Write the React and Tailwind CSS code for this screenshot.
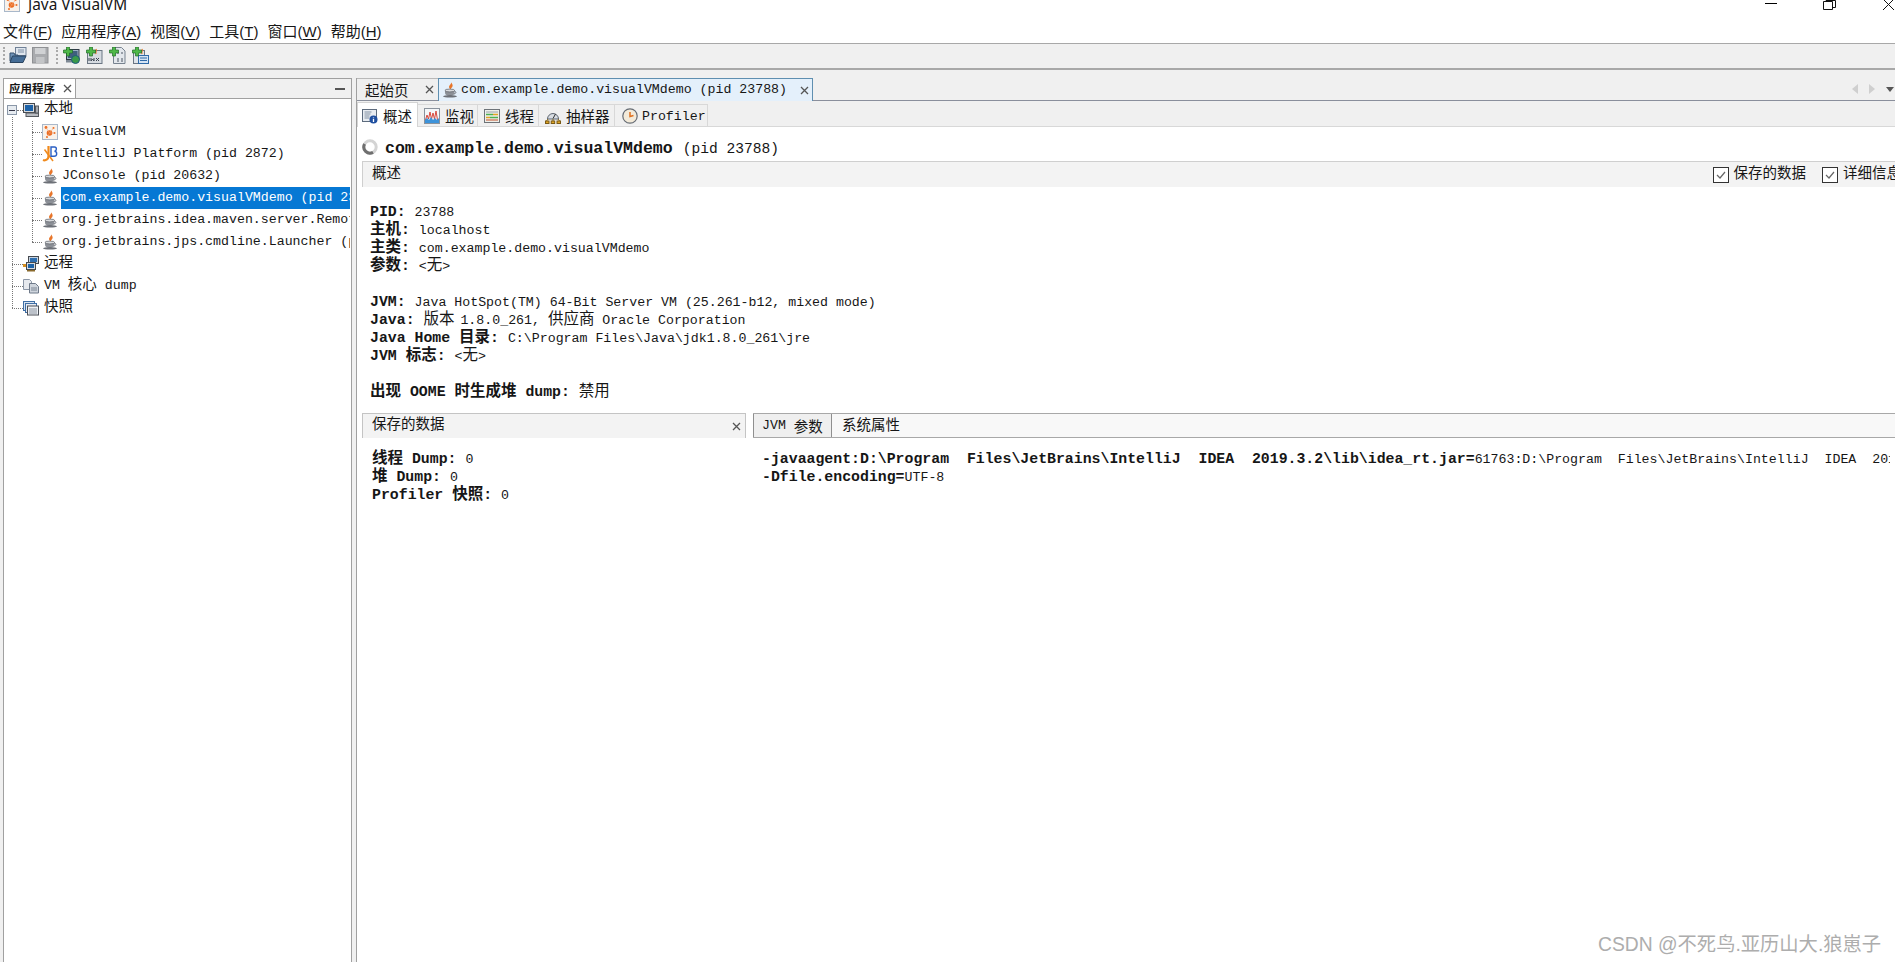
import React from "react";

const Z = ({ children }) => (
    <span className="font-['Noto_Sans_CJK_SC','Liberation_Sans',sans-serif] text-[15.5px] leading-[10px]">{children}</span>
);
const L = ({ children }) => (
    <span className="font-['Noto_Sans_CJK_SC','Liberation_Sans',sans-serif] text-[14.5px] leading-[10px]">{children}</span>
);
const B = ({ children }) => <span className="font-bold text-[14.85px] leading-[10px] whitespace-pre">{children}</span>;

const JavaIcon = () => (
    <svg width="16" height="16" viewBox="0 0 16 16" className="shrink-0">
        <path d="M9 .3c.8 2-2.600 3-1.800 5.500.3.8.9 1.300 1.500 1.800-.2-1.300 2.600-2.400 1.800-4.800C10.200 1.900 9.700 1.100 9 .3z" fill="#e8762b" />
        <path d="M3 8.500h9.500v2.500c0 1.900-2 2.800-4.700 2.800S3 12.900 3 11z" fill="#8c9097" />
        <ellipse cx="7.800" cy="8.500" rx="4.900" ry="1.400" fill="#d9dbde" stroke="#5a5e66" strokeWidth=".7" />
        <ellipse cx="8" cy="14.300" rx="7" ry="1.300" fill="#6d7178" />
        <path d="M12.500 9.300c2 0 1.800 2.400-.6 2.600" stroke="#6d7178" fill="none" />
    </svg>
);

const VisualVMIcon = () => (
    <svg width="16" height="16" viewBox="0 0 16 16" className="shrink-0">
        <rect x=".5" y=".5" width="15" height="15" fill="#f8f1ea" stroke="#a9b8ca" />
        <circle cx="7.500" cy="9" r="2.800" fill="#ec6a1f" />
        <circle cx="4" cy="3.500" r="1.400" fill="#ec6a1f" />
        <circle cx="11.500" cy="4" r="1" fill="#ec6a1f" />
        <circle cx="5" cy="13" r="1" fill="#ec6a1f" />
        <circle cx="12.500" cy="9" r="1" fill="#ec6a1f" />
        <path d="M4 3.500 7.500 9l4-5M7.500 9l-2.500 4M7.500 9h5" stroke="#f2a273" strokeWidth=".6" fill="none" />
    </svg>
);

const IdeaIcon = () => (
    <svg width="16" height="16" viewBox="0 0 16 16" className="shrink-0">
        <path d="M6.500 0v10c0 3.500-3 5-5.500 4" stroke="#f08a1d" strokeWidth="2.200" fill="none" />
        <path d="M2.500 3.500 11 15" stroke="#f08a1d" strokeWidth="1.600" fill="none" />
        <path d="M9 1h3.500c2.500 0 2.500 4 0 4.300 3 .3 3 5-.5 5H9z" stroke="#2a5fc4" strokeWidth="1.400" fill="none" />
    </svg>
);

const HostIcon = () => (
    <svg width="16" height="16" viewBox="0 0 16 16" className="shrink-0">
        <rect x=".5" y="1.500" width="11" height="9" fill="#d8dadd" stroke="#45494f" />
        <rect x="2" y="3" width="8" height="6" fill="#1c62a8" />
        <rect x="3" y="11" width="12.500" height="3.500" fill="#b8bbc0" stroke="#55595f" />
        <rect x="12.500" y="4" width="3" height="7" fill="#a9acb1" stroke="#55595f" />
    </svg>
);

const RemoteIcon = () => (
    <svg width="16" height="16" viewBox="0 0 16 16" className="shrink-0">
        <rect x="5.500" y=".5" width="10" height="7" fill="#c9d4e0" stroke="#45494f" />
        <rect x="7" y="2" width="7" height="4" fill="#2f6fb0" />
        <rect x="3.500" y="6.500" width="9" height="7" fill="#d8dadd" stroke="#45494f" />
        <rect x="5" y="8" width="6" height="4" fill="#1c62a8" />
        <rect x="0" y="8" width="3" height="3" fill="#d9901e" />
        <rect x="4" y="14" width="8" height="1.500" fill="#8a6a2c" />
    </svg>
);

const DumpIcon = () => (
    <svg width="16" height="16" viewBox="0 0 16 16" className="shrink-0">
        <path d="M.5 1.500h6l2 2v8h-8z" fill="#e6e9ee" stroke="#8b96a6" />
        <path d="M6.500 5.500h6l3 3v6.500h-9z" fill="#cfd5dd" stroke="#6f7a8a" />
        <path d="M8 10h6M8 12h6" stroke="#7c8796" />
    </svg>
);

const SnapshotIcon = () => (
    <svg width="16" height="16" viewBox="0 0 16 16" className="shrink-0">
        <rect x=".5" y="1.500" width="11" height="9" fill="#d9e4f1" stroke="#3f6ea5" />
        <rect x="2.500" y="3.500" width="11" height="9" fill="#e6ebf2" stroke="#3f6ea5" />
        <rect x="4.500" y="6" width="11" height="9" fill="#eef1f5" stroke="#4a4f57" />
        <path d="M6 9h8M6 11h8M6 13h8" stroke="#8a929e" />
    </svg>
);

const Plus = () => (
    <path d="M3.500 0h3v3h3v3h-3v3h-3V6h-3V3h3z" fill="#4fb848" stroke="#1f6b2a" strokeWidth=".7" />
);

const OpenIcon = () => (
    <svg width="18" height="17" viewBox="0 0 18 17">
        <rect x="6.500" y=".5" width="10.500" height="8" fill="#dfe6ee" stroke="#6f8096" />
        <path d="M9 3h6M9 5h6" stroke="#7d8ea3" />
        <path d="M1 6h4l1 2h3v6H1z" fill="#6f93b8" stroke="#35506e" />
        <path d="M1 15.500 3.500 9H17l-3 6.500z" fill="#456d96" stroke="#2b4560" />
    </svg>
);

const SaveIcon = () => (
    <svg width="17" height="17" viewBox="0 0 17 17">
        <rect x=".5" y=".5" width="15.500" height="15.500" fill="#a9abae" stroke="#8f9194" />
        <rect x="3" y="1" width="10.500" height="6" fill="#d0d2d4" />
        <rect x="4" y="10" width="8.500" height="6" fill="#c3c5c7" />
    </svg>
);

const AddHostIcon = () => (
    <svg width="17" height="17" viewBox="0 0 17 17">
        <rect x="3.500" y="2.500" width="12.500" height="10" fill="#9fb2c6" stroke="#2e3a46" />
        <rect x="5" y="4" width="9.500" height="7" fill="#3f5f7d" />
        <rect x="3" y="13" width="10" height="2.500" fill="#7d8894" />
        <circle cx="12.500" cy="12.500" r="4" fill="#3a9a4a" stroke="#1e5a7d" />
        <Plus />
    </svg>
);

const AddJmxIcon = () => (
    <svg width="17" height="17" viewBox="0 0 17 17">
        <rect x="1.500" y="3.500" width="14.500" height="13" fill="#d6dbe1" stroke="#6b7683" />
        <path d="M10 2c1 2-1 3 0 5" stroke="#e8762b" strokeWidth="1.300" fill="none" />
        <path d="M3 14v-3M5 11v3l1.500-2 1.500 2v-3M10 11l3 3M13 11l-3 3" stroke="#3b4450" fill="none" />
        <Plus />
    </svg>
);

const AddCoreIcon = () => (
    <svg width="17" height="17" viewBox="0 0 17 17">
        <path d="M4.500.5h8l3.500 3.500v12.500H4.500z" fill="#e3e7ec" stroke="#77828f" />
        <path d="M8 6h2M12 6h2M8 12h2M12 12h2M8 14h2M12 14h2" stroke="#4a5563" />
        <Plus />
    </svg>
);

const AddSnapIcon = () => (
    <svg width="17" height="17" viewBox="0 0 17 17">
        <rect x="1.500" y="3.500" width="11" height="13" fill="#dfe4ea" stroke="#6b7683" />
        <path d="M10 2c1 2-1 3 0 5" stroke="#e8762b" strokeWidth="1.300" fill="none" />
        <rect x="6.500" y="8.500" width="10" height="8" fill="#d5e4f4" stroke="#2f6aa8" />
        <path d="M8 11h7M8 13.500h7" stroke="#2f6aa8" />
        <Plus />
    </svg>
);

const OverviewIcon = () => (
    <svg width="16" height="16" viewBox="0 0 16 16" className="shrink-0">
        <rect x=".5" y="1.500" width="14" height="12" fill="#e8ecf1" stroke="#5d6b7d" />
        <path d="M2.500 4h7M2.500 6h6M2.500 8h5M2.500 10h5" stroke="#8391a3" />
        <circle cx="11.500" cy="11.500" r="4" fill="#1f4fa0" />
        <path d="M11.500 9.500v.8M11.500 11v3" stroke="#fff" strokeWidth="1.300" />
    </svg>
);

const MonitorIcon = () => (
    <svg width="16" height="16" viewBox="0 0 16 16" className="shrink-0">
        <rect x=".5" y=".5" width="15" height="15" fill="#f4f6f8" stroke="#8a929c" />
        <path d="M1.500 12 3 7l1.500 4L6 4l1.500 7L9 5l1.500 6L12 3l1.500 9" stroke="#d8483c" fill="none" />
        <path d="M1 15v-3l2-2 2 2 2-3 2 3 2-2 2 2 2-2v5z" fill="#3d93da" />
    </svg>
);

const ThreadsIcon = () => (
    <svg width="16" height="16" viewBox="0 0 16 16" className="shrink-0">
        <rect x=".5" y="1.500" width="15" height="13" fill="#eef0ea" stroke="#6e7378" />
        <path d="M2 4h12" stroke="#9aa3ad" />
        <path d="M2 6.500h7" stroke="#4caf50" strokeWidth="1.500" />
        <path d="M9 6.500h5" stroke="#e0a526" strokeWidth="1.500" />
        <path d="M2 9.500h4" stroke="#e0a526" strokeWidth="1.500" />
        <path d="M6 9.500h8" stroke="#4caf50" strokeWidth="1.500" />
        <path d="M2 12h12" stroke="#c96b4a" strokeWidth="1.200" />
    </svg>
);

const SamplerIcon = () => (
    <svg width="16" height="16" viewBox="0 0 16 16" className="shrink-0">
        <path d="M2.500 11a5.500 5.500 0 1 1 11 0z" fill="#d8dde3" stroke="#5d6570" />
        <path d="M8 10.500 10.500 6" stroke="#333" />
        <path d="M3 11 1.500 13M8 11v2M13 11l1.500 2" stroke="#8a6a1c" />
        <rect x=".5" y="13" width="3.500" height="2.500" fill="#e0a526" stroke="#7a5a14" />
        <rect x="6.200" y="13" width="3.500" height="2.500" fill="#e0a526" stroke="#7a5a14" />
        <rect x="12" y="13" width="3.500" height="2.500" fill="#e0a526" stroke="#7a5a14" />
    </svg>
);

const ProfilerIcon = () => (
    <svg width="16" height="16" viewBox="0 0 16 16" className="ml-[1px] shrink-0">
        <circle cx="8" cy="8" r="7.200" fill="#f3ead9" stroke="#666c74" strokeWidth="1.200" />
        <path d="M8 4v4.500l3.500-1" stroke="#e0701e" strokeWidth="1.500" fill="none" />
    </svg>
);

const Spinner = () => (
    <svg width="16" height="16" viewBox="0 0 16 16" className="-mt-[5px] shrink-0">
        <circle cx="8" cy="8" r="6.200" fill="none" stroke="#d4d4d4" strokeWidth="3" />
        <path d="M2.600 5A6.200 6.200 0 0 0 11 13.400" fill="none" stroke="#6f6f6f" strokeWidth="3" />
    </svg>
);

const Checked = () => (
    <svg width="16" height="16" viewBox="0 0 16 16" className="shrink-0">
        <rect x=".5" y=".5" width="15" height="15" fill="#fff" stroke="#333" />
        <path d="M4 8l3 3 5-6" fill="none" stroke="#666" strokeWidth="1.200" />
    </svg>
);

const CloseX = () => (
    <svg width="9" height="9" viewBox="0 0 9 9" className="shrink-0">
        <path d="M1 1l7 7M8 1L1 8" stroke="#555" strokeWidth="1.300" />
    </svg>
);

const MenuItem = ({ zh, letter }) => (
    <span className="whitespace-nowrap">
        {zh}(<span className="underline underline-offset-2">{letter}</span>)
    </span>
);

const Line = ({ children }) => <div className="h-[18px]">{children}</div>;

const TreeRoot = ({ icon, children }) => (
    <div className="relative flex h-[22px] items-center pl-[19px]">
        <span className="absolute left-[8px] top-[11px] w-[11px] border-t border-dotted border-[#777]" />
        {icon}
        <span className="ml-[5px] whitespace-pre">{children}</span>
    </div>
);

const TreeChild = ({ icon, selected, children }) => (
    <div className="relative flex h-[22px] items-center pl-[38px] pr-[1px]">
        <span className="absolute left-[28px] top-[11px] w-[10px] border-t border-dotted border-[#777]" />
        {icon}
        <span className={selected
            ? "ml-[3px] flex h-full min-w-0 flex-1 items-center overflow-hidden whitespace-nowrap bg-[#0678d4] pl-[1px] text-white"
            : "ml-[3px] flex h-full min-w-0 flex-1 items-center overflow-hidden whitespace-nowrap pl-[1px]"}>
            {children}
        </span>
    </div>
);

const SubTab = ({ icon, width, active, children }) => (
    <div className={active
        ? "mt-[1px] flex h-[26px] items-center gap-[5px] border border-b-0 border-[#d4d4d4] bg-white pl-[4px]"
        : "mt-[3px] flex h-[23px] items-center gap-[5px] border-r border-t border-[#d8d8d8] pl-[6px]"}
        style={{ width }}>
        {icon}
        {children}
    </div>
);

const Sidebar = () => (
    <aside className="flex w-[349px] shrink-0 flex-col overflow-hidden border-x border-t border-[#a0a0a0] bg-white">
        <div className="flex h-[20px] shrink-0 items-center border-b border-[#a0a0a0] bg-[#f0f0f0]">
            <div className="flex h-full w-[72px] items-center border-r border-[#a0a0a0] bg-white pl-[5px]">
                <span className="font-['Noto_Sans_CJK_SC',sans-serif] text-[11.5px] font-bold leading-none">应用程序</span>
                <span className="ml-[8px]"><CloseX /></span>
            </div>
            <span className="ml-auto mr-[6px] h-[2px] w-[10px] bg-[#555]" />
        </div>
        <div className="relative">
            <span className="absolute left-[8px] top-[18px] h-[191px] border-l border-dotted border-[#777]" />
            <span className="absolute left-[28px] top-[22px] h-[121px] border-l border-dotted border-[#777]" />
            <div className="relative flex h-[22px] items-center pl-[19px]">
                <span className="absolute left-[3px] top-[6px] flex h-[10px] w-[10px] items-center justify-center border border-[#8a97a8] bg-[#e6ebf0]">
                    <span className="h-[1px] w-[6px] bg-[#334]" />
                </span>
                <span className="absolute left-[13px] top-[11px] w-[6px] border-t border-dotted border-[#777]" />
                <HostIcon />
                <span className="ml-[5px]"><L>本地</L></span>
            </div>
            <TreeChild icon={<VisualVMIcon />}>VisualVM</TreeChild>
            <TreeChild icon={<IdeaIcon />}>IntelliJ Platform (pid 2872)</TreeChild>
            <TreeChild icon={<JavaIcon />}>JConsole (pid 20632)</TreeChild>
            <TreeChild icon={<JavaIcon />} selected>com.example.demo.visualVMdemo (pid 23788)</TreeChild>
            <TreeChild icon={<JavaIcon />}>org.jetbrains.idea.maven.server.RemoteMavenServer (pid 9120)</TreeChild>
            <TreeChild icon={<JavaIcon />}>org.jetbrains.jps.cmdline.Launcher (pid 15144)</TreeChild>
            <TreeRoot icon={<RemoteIcon />}><L>远程</L></TreeRoot>
            <TreeRoot icon={<DumpIcon />}>VM <L>核心</L> dump</TreeRoot>
            <TreeRoot icon={<SnapshotIcon />}><L>快照</L></TreeRoot>
        </div>
    </aside>
);

const Overview = () => (
    <div className="px-[5px]">
        <div className="flex h-[34px] items-center gap-[7px] pt-[10px]">
            <Spinner />
            <span className="text-[16.55px] font-bold whitespace-pre">com.example.demo.visualVMdemo</span>
            <span className="ml-[3px] text-[14.6px]">(pid 23788)</span>
        </div>
        <div className="-mr-[11px] flex h-[26px] items-center border-l border-t border-[#cfcfcf] bg-[#f3f3f3] pl-[9px]">
            <span><L>概述</L></span>
            <div className="ml-auto flex items-center whitespace-nowrap">
                <Checked />
                <span className="ml-[5px] mr-[16px]"><L>保存的数据</L></span>
                <Checked />
                <span className="ml-[5px]"><L>详细信息</L></span>
            </div>
        </div>
        <div className="pl-[8px] pt-[17px] whitespace-pre">
            <Line><B>PID: </B>23788</Line>
            <Line><B><Z>主机</Z>: </B>localhost</Line>
            <Line><B><Z>主类</Z>: </B>com.example.demo.visualVMdemo</Line>
            <Line><B><Z>参数</Z>: </B>&lt;<Z>无</Z>&gt;</Line>
            <div className="h-[18px]" />
            <Line><B>JVM: </B>Java HotSpot(TM) 64-Bit Server VM (25.261-b12, mixed mode)</Line>
            <Line><B>Java: </B><Z>版本</Z><span className="-ml-[2px]"> 1.8.0_261, </span><Z>供应商</Z> Oracle Corporation</Line>
            <Line><B>Java Home <Z>目录</Z>: </B>C:\Program Files\Java\jdk1.8.0_261\jre</Line>
            <Line><B>JVM <Z>标志</Z>: </B>&lt;<Z>无</Z>&gt;</Line>
            <div className="h-[18px]" />
            <Line><B><Z>出现</Z> OOME <Z>时生成堆</Z> dump: </B><Z>禁用</Z></Line>
        </div>
        <div className="mt-[11px] flex">
            <section className="w-[384px] shrink-0">
                <div className="flex h-[25px] items-center border-x border-t border-[#c4c4c4] bg-[#f3f3f3] pl-[9px] pr-[4px]">
                    <span><L>保存的数据</L></span>
                    <span className="ml-auto"><CloseX /></span>
                </div>
                <div className="pl-[10px] pt-[13px] whitespace-pre">
                    <Line><B><Z>线程</Z> Dump: </B>0</Line>
                    <Line><B><Z>堆</Z> Dump: </B>0</Line>
                    <Line><B>Profiler <Z>快照</Z>: </B>0</Line>
                </div>
            </section>
            <section className="ml-[7px] min-w-0 flex-1">
                <div className="-mr-[10px] flex h-[25px] items-center border-y border-[#a8a8a8] bg-[#f8f8f8]">
                    <div className="flex h-full w-[79px] items-center whitespace-pre border-x border-[#8f8f8f] bg-[#efefef] pl-[8px]">JVM <L>参数</L></div>
                    <span className="ml-[10px] mt-[2px]"><L>系统属性</L></span>
                </div>
                <div className="overflow-hidden pl-[9px] pt-[13px] whitespace-pre">
                    <Line><B>-javaagent:D:\Program  Files\JetBrains\IntelliJ  IDEA  2019.3.2\lib\idea_rt.jar=</B>61763:D:\Program  Files\JetBrains\IntelliJ  IDEA  2019.3.2\bin</Line>
                    <Line><B>-Dfile.encoding=</B>UTF-8</Line>
                </div>
            </section>
        </div>
    </div>
);

const Workspace = () => (
    <main className="ml-[4px] flex min-w-0 flex-1 flex-col overflow-hidden border-l border-[#a0a0a0]">
        <div className="flex h-[23px] shrink-0 items-stretch border-b border-[#8a8f9c]">
            <div className="flex w-[81px] items-center whitespace-nowrap border-t border-[#b8b8b8] bg-[#efefef] pl-[8px]">
                <L>起始页</L>
                <span className="ml-[16px]"><CloseX /></span>
            </div>
            <div className="-mb-[1px] flex w-[375px] items-center border-x border-t border-[#5f8fb0] bg-[#e4f0fb] pl-[3px]">
                <JavaIcon />
                <span className="ml-[3px] whitespace-nowrap">com.example.demo.visualVMdemo (pid 23788)</span>
                <span className="ml-[13px]"><CloseX /></span>
            </div>
            <div className="ml-auto flex items-center gap-[11px] pr-[1px]">
                <span className="h-0 w-0 border-y-[5px] border-r-[6px] border-y-transparent border-r-[#cfcfcf]" />
                <span className="h-0 w-0 border-y-[5px] border-l-[6px] border-y-transparent border-l-[#cfcfcf]" />
                <span className="h-0 w-0 border-x-[4px] border-t-[5px] border-x-transparent border-t-[#555]" />
            </div>
        </div>
        <div className="flex h-[26px] shrink-0 border-b border-[#d8d8d8]">
            <SubTab icon={<OverviewIcon />} width={61} active><L>概述</L></SubTab>
            <SubTab icon={<MonitorIcon />} width={60}><L>监视</L></SubTab>
            <SubTab icon={<ThreadsIcon />} width={61}><L>线程</L></SubTab>
            <SubTab icon={<SamplerIcon />} width={76}><L>抽样器</L></SubTab>
            <SubTab icon={<ProfilerIcon />} width={93}><span className="-ml-[1px] mt-[2px]">Profiler</span></SubTab>
        </div>
        <div className="flex-1 overflow-hidden bg-white">
            <Overview />
        </div>
    </main>
);

const App = () => (
    <div className="relative flex h-screen flex-col overflow-hidden bg-white font-['Liberation_Mono','Noto_Sans_CJK_SC',monospace] text-[13.25px] leading-[18px] text-[#161616]">
        <header className="flex h-[22px] shrink-0 overflow-hidden">
            <div className="-mt-[4px] ml-[4px] flex h-[16px] items-center">
                <VisualVMIcon />
            </div>
            <span className="-mt-[5px] ml-[8px] font-['Noto_Sans','Liberation_Sans',sans-serif] text-[15.4px] leading-[20px]">Java VisualVM</span>
            <div className="ml-auto flex">
                <span className="mr-[46px] mt-[3px] h-[1px] w-[12px] bg-black" />
                <svg width="13" height="10" viewBox="0 0 13 10" className="mr-[46px]">
                    <path d="M.5 1.500h9v8h-9zM3 1.500V.5h9.500v7H10" fill="none" stroke="#111" />
                </svg>
                <svg width="13" height="11" viewBox="0 0 13 11">
                    <path d="M1 -1l11 11M12 -1L1 10" fill="none" stroke="#111" />
                </svg>
            </div>
        </header>
        <nav className="flex h-[21px] shrink-0 items-center gap-[9px] pb-[2px] pl-[3px] font-['Liberation_Sans','Noto_Sans_CJK_SC',sans-serif] text-[15px]">
            <MenuItem zh="文件" letter="F" />
            <MenuItem zh="应用程序" letter="A" />
            <MenuItem zh="视图" letter="V" />
            <MenuItem zh="工具" letter="T" />
            <MenuItem zh="窗口" letter="W" />
            <MenuItem zh="帮助" letter="H" />
        </nav>
        <div className="flex h-[27px] shrink-0 items-center border-y border-b-2 border-[#a8a8a8] bg-[#f0f0f0] pb-[1px] pl-[3px]">
            <span className="h-[17px] border-l-2 border-dotted border-[#aaa]" />
            <span className="ml-[4px]"><OpenIcon /></span>
            <span className="ml-[5px]"><SaveIcon /></span>
            <span className="ml-[7px] h-[17px] border-l-2 border-dotted border-[#aaa]" />
            <span className="ml-[5px]"><AddHostIcon /></span>
            <span className="ml-[6px]"><AddJmxIcon /></span>
            <span className="ml-[6px]"><AddCoreIcon /></span>
            <span className="ml-[6px]"><AddSnapIcon /></span>
        </div>
        <div className="flex min-h-0 flex-1 bg-[#f0f0f0] pl-[3px] pt-[8px]">
            <Sidebar />
            <Workspace />
        </div>
        <span className="absolute bottom-[5px] left-[1598px] font-['Liberation_Sans','Noto_Sans_CJK_SC',sans-serif] text-[19.3px] leading-[24px] whitespace-nowrap text-[#adadad]">
            CSDN @不死鸟.亚历山大.狼崽子
        </span>
    </div>
);

export default App;
